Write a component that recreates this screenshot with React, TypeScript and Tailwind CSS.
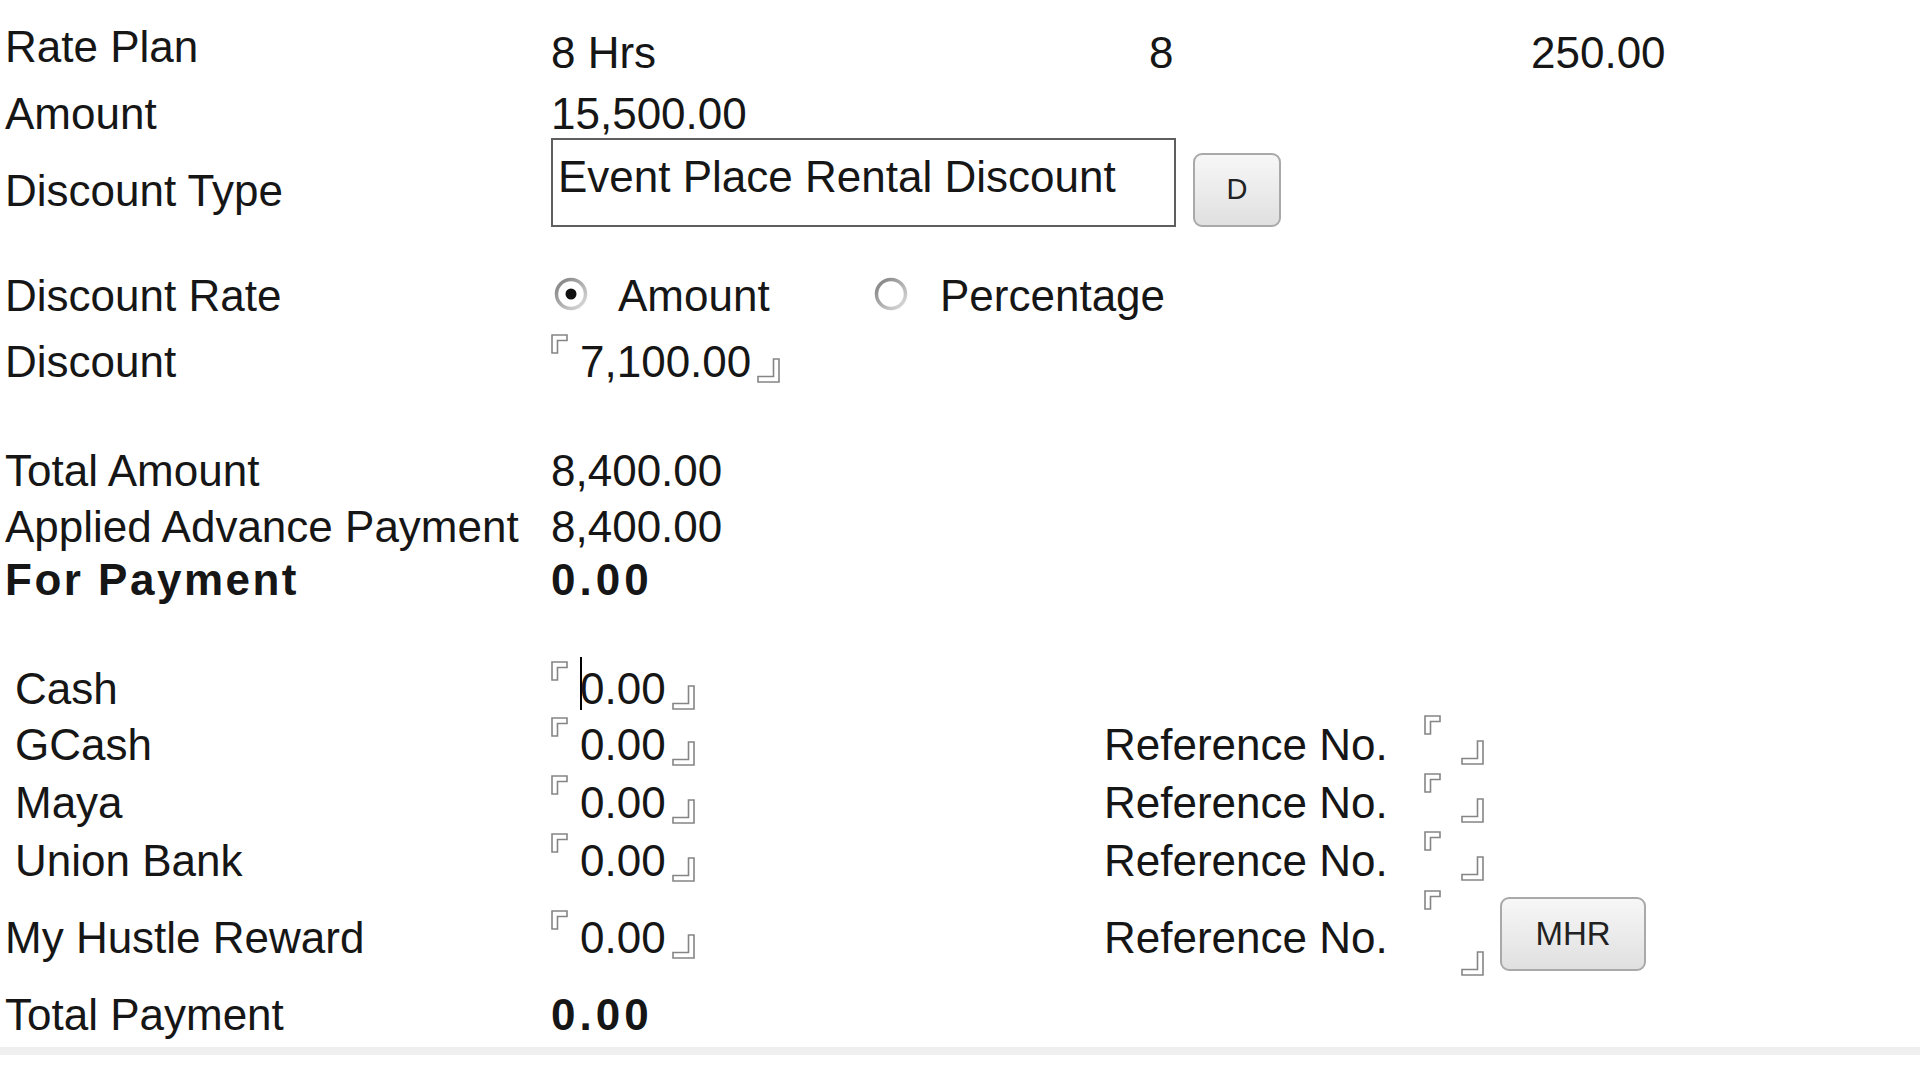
import React from 'react';

const MarkTL = () => (
  <svg width="17" height="20" viewBox="0 0 17 20" className="shrink-0">
    <path d="M1 1H16V6.5H6.5V19H1Z" fill="white" stroke="#858585" strokeWidth="1.6" />
  </svg>
);

const MarkBR = () => (
  <svg width="23" height="25" viewBox="0 0 23 25" className="shrink-0">
    <path d="M22 1V24H1V18.5H16.5V1Z" fill="white" stroke="#858585" strokeWidth="1.6" />
  </svg>
);

const Radio = ({ checked }: { checked?: boolean }) => (
  <svg width="36" height="36" viewBox="0 0 36 36" className="shrink-0">
    <defs>
      <linearGradient id="ring" x1="0" y1="0" x2="1" y2="1">
        <stop offset="0" stopColor="#7e7e7e" />
        <stop offset="1" stopColor="#dedede" />
      </linearGradient>
    </defs>
    <circle cx="18" cy="18" r="14.5" fill="white" stroke="url(#ring)" strokeWidth="3.5" />
    {checked && <circle cx="18" cy="18" r="5.5" fill="#111" />}
  </svg>
);

// value box drawn with corner marks, like the original masked fields
const Field = ({ value, caret }: { value: string; caret?: boolean }) => (
  <div className="flex h-[49px] mb-[8px]">
    <div className="self-start"><MarkTL /></div>
    <div className="flex items-center ml-[12px] mt-[8px]">
      {caret && <span className="w-[2px] h-[53px] bg-black -mr-[2px] mb-[12px]"></span>}
      <span className="leading-[50px]">{value}</span>
    </div>
    <div className="self-end ml-[6px]"><MarkBR /></div>
  </div>
);

const RefField = ({ tall }: { tall?: boolean }) => (
  <div className={tall ? 'flex h-[86px] mb-[10px]' : 'flex h-[50px] mb-[10px]'}>
    <div className="self-start"><MarkTL /></div>
    <div className="self-end ml-[20px]"><MarkBR /></div>
  </div>
);

const Label = ({ children, indent }: { children: React.ReactNode; indent?: boolean }) => (
  <div className={indent ? 'w-[546px] pl-[10px] leading-[50px]' : 'w-[546px] leading-[50px]'}>{children}</div>
);

const payments = [
  { name: 'GCash', mt: 'mt-[6px]' },
  { name: 'Maya', mt: 'mt-[8px]' },
  { name: 'Union Bank', mt: 'mt-[8px]' },
];

export default function App() {
  return (
    <div className="w-[1920px] h-[1080px] bg-white text-[#161616] text-[44px] font-['Liberation_Sans',Arial,sans-serif] overflow-hidden">
      <div className="pl-[5px] pt-[22px]">
        {/* Rate Plan */}
        <div className="flex items-start h-[56px]">
          <Label>Rate Plan</Label>
          <div className="w-[598px] mt-[6px] leading-[50px]">8 Hrs</div>
          <div className="w-[382px] mt-[6px] leading-[50px]">8</div>
          <div className="mt-[6px] leading-[50px]">250.00</div>
        </div>

        {/* Amount */}
        <div className="flex items-center h-[49px] mt-[11px]">
          <Label>Amount</Label>
          <div className="leading-[50px]">15,500.00</div>
        </div>

        {/* Discount Type */}
        <div className="flex items-start h-[89px]">
          <div className="w-[546px] mt-[28px] leading-[50px]">Discount Type</div>
          <div className="w-[625px] h-[89px] border-2 border-[#5e5e5e] bg-white pl-[5px] pt-[12px] leading-[50px]">
            Event Place Rental Discount
          </div>
          <button className="ml-[17px] mt-[15px] w-[88px] h-[74px] rounded-[9px] border-2 border-[#a9a9a9] bg-gradient-to-b from-[#f7f7f7] to-[#e0e0e0] text-[29px] text-[#222] flex items-center justify-center">
            D
          </button>
        </div>

        {/* Discount Rate */}
        <div className="flex items-center h-[50px] mt-[44px]">
          <Label>Discount Rate</Label>
          <div className="w-[322px] flex items-center">
            <div className="ml-[2px] mb-[4px]"><Radio checked /></div>
            <span className="ml-[29px] leading-[50px]">Amount</span>
          </div>
          <div className="flex items-center">
            <div className="mb-[4px]"><Radio /></div>
            <span className="ml-[31px] leading-[50px]">Percentage</span>
          </div>
        </div>

        {/* Discount */}
        <div className="flex items-center h-[50px] mt-[16px]">
          <Label>Discount</Label>
          <Field value="7,100.00" />
        </div>

        {/* Totals */}
        <div className="flex items-center h-[50px] mt-[59px]">
          <Label>Total Amount</Label>
          <div className="leading-[50px]">8,400.00</div>
        </div>
        <div className="flex items-center h-[50px] mt-[6px]">
          <Label>Applied Advance Payment</Label>
          <div className="leading-[50px]">8,400.00</div>
        </div>
        <div className="flex items-center h-[50px] mt-[3px] font-bold">
          <div className="w-[546px] leading-[50px] tracking-[2.5px]">For Payment</div>
          <div className="leading-[50px] tracking-[4px]">0.00</div>
        </div>

        {/* Payments */}
        <div className="flex items-center h-[50px] mt-[59px]">
          <Label indent>Cash</Label>
          <Field value="0.00" caret />
        </div>
        {payments.map((p) => (
          <div key={p.name} className={`flex items-center h-[50px] ${p.mt}`}>
            <Label indent>{p.name}</Label>
            <div className="w-[553px]">
              <div className="w-fit"><Field value="0.00" /></div>
            </div>
            <div className="w-[320px] leading-[50px]">Reference No.</div>
            <RefField />
          </div>
        ))}
        <div className="flex items-center h-[50px] mt-[27px]">
          <Label>My Hustle Reward</Label>
          <div className="w-[553px]">
            <div className="w-fit"><Field value="0.00" /></div>
          </div>
          <div className="w-[320px] leading-[50px]">Reference No.</div>
          <RefField tall />
          <button className="ml-[16px] mb-[8px] w-[146px] h-[74px] rounded-[9px] border-2 border-[#a9a9a9] bg-gradient-to-b from-[#f7f7f7] to-[#e0e0e0] text-[33px] text-[#222] flex items-center justify-center">
            MHR
          </button>
        </div>

        <div className="flex items-center h-[50px] mt-[27px]">
          <Label>Total Payment</Label>
          <div className="leading-[50px] font-bold tracking-[4px]">0.00</div>
        </div>
      </div>
      <div className="mt-[7px] h-[8px] bg-[#efefef]"></div>
    </div>
  );
}
